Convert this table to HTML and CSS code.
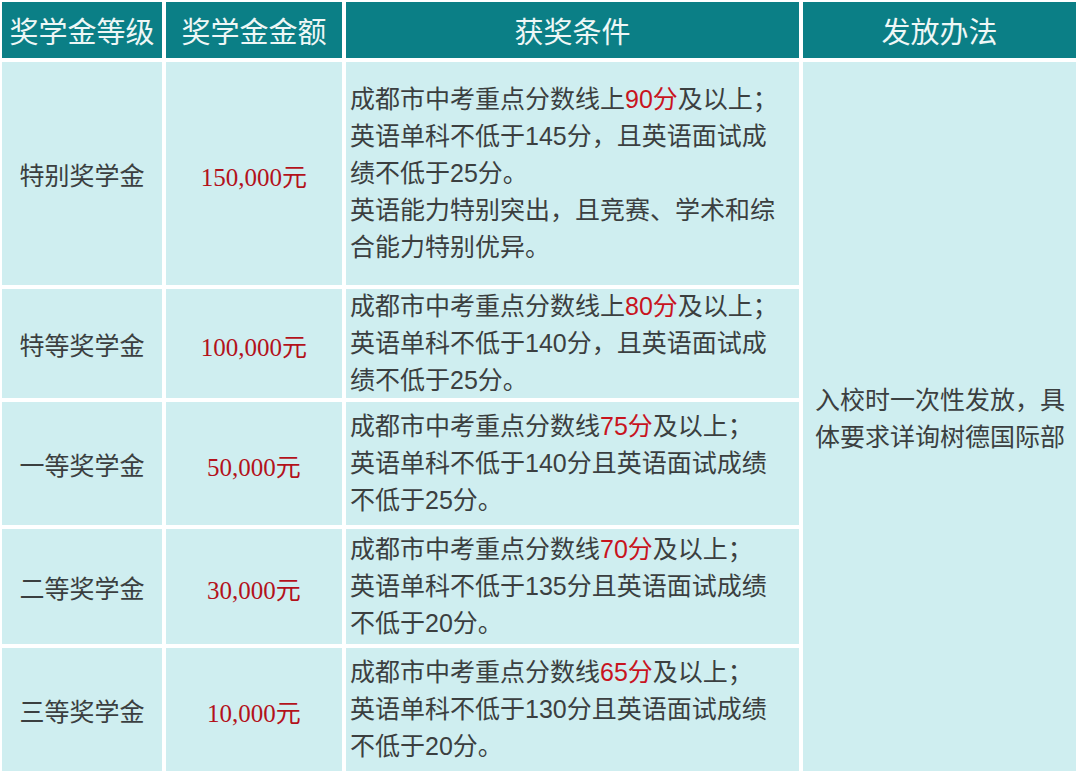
FILE: index.html
```html
<!DOCTYPE html>
<html lang="zh-CN">
<head>
<meta charset="utf-8">
<title>奖学金</title>
<link rel="stylesheet" href="styles.css">
</head>
<body>
<div class="table">
  <div class="th">奖学金等级</div>
  <div class="th">奖学金金额</div>
  <div class="th">获奖条件</div>
  <div class="th">发放办法</div>

  <div class="td level">特别奖学金</div>
  <div class="td amount">150,000元</div>
  <div class="td cond"><p class="text">成都市中考重点分数线上<span class="hl">90分</span>及以上；<br>英语单科不低于145分，且英语面试成<br>绩不低于25分。<br>英语能力特别突出，且竞赛、学术和综<br>合能力特别优异。</p></div>

  <div class="td method"><p class="text">入校时一次性发放，具<br>体要求详询树德国际部</p></div>

  <div class="td level">特等奖学金</div>
  <div class="td amount">100,000元</div>
  <div class="td cond"><p class="text">成都市中考重点分数线上<span class="hl">80分</span>及以上；<br>英语单科不低于140分，且英语面试成<br>绩不低于25分。</p></div>

  <div class="td level">一等奖学金</div>
  <div class="td amount">50,000元</div>
  <div class="td cond"><p class="text">成都市中考重点分数线<span class="hl">75分</span>及以上；<br>英语单科不低于140分且英语面试成绩<br>不低于25分。</p></div>

  <div class="td level">二等奖学金</div>
  <div class="td amount">30,000元</div>
  <div class="td cond"><p class="text">成都市中考重点分数线<span class="hl">70分</span>及以上；<br>英语单科不低于135分且英语面试成绩<br>不低于20分。</p></div>

  <div class="td level">三等奖学金</div>
  <div class="td amount">10,000元</div>
  <div class="td cond"><p class="text">成都市中考重点分数线<span class="hl">65分</span>及以上；<br>英语单科不低于130分且英语面试成绩<br>不低于20分。</p></div>
</div>
</body>
</html>
```

FILE: styles.css
```css
html, body {
  margin: 0;
  padding: 0;
  background: #ffffff;
}

.table {
  display: grid;
  grid-template-columns: 160px 176px 453px 273px;
  grid-template-rows: 56px 223px 109px 123px 115px 123px;
  gap: 4px;
  padding: 2px;
  width: 1080px;
  box-sizing: border-box;
  font-family: "Noto Sans CJK SC", sans-serif;
  color: #3b3f40;
}

.th {
  background: #0b7f86;
  color: #eef7f6;
  font-size: 29px;
  display: flex;
  align-items: center;
  justify-content: center;
}

.td {
  background: #cfeef0;
  display: flex;
  align-items: center;
}

.text {
  margin: 0;
  white-space: nowrap;
}

.level {
  justify-content: center;
  font-size: 25px;
}

.amount {
  justify-content: center;
  font-family: "Liberation Serif", "Noto Sans CJK SC", serif;
  font-size: 25px;
  color: #b3121b;
  padding-top: 2px;
}

.cond {
  font-family: "Liberation Sans", "Noto Sans CJK SC", sans-serif;
  font-size: 25px;
  line-height: 37px;
  padding-left: 4px;
}

.cond .hl {
  color: #c8141e;
}

.method {
  grid-column: 4;
  grid-row: 2 / 7;
  font-size: 25px;
  line-height: 37px;
  padding-left: 12px;
}
```
